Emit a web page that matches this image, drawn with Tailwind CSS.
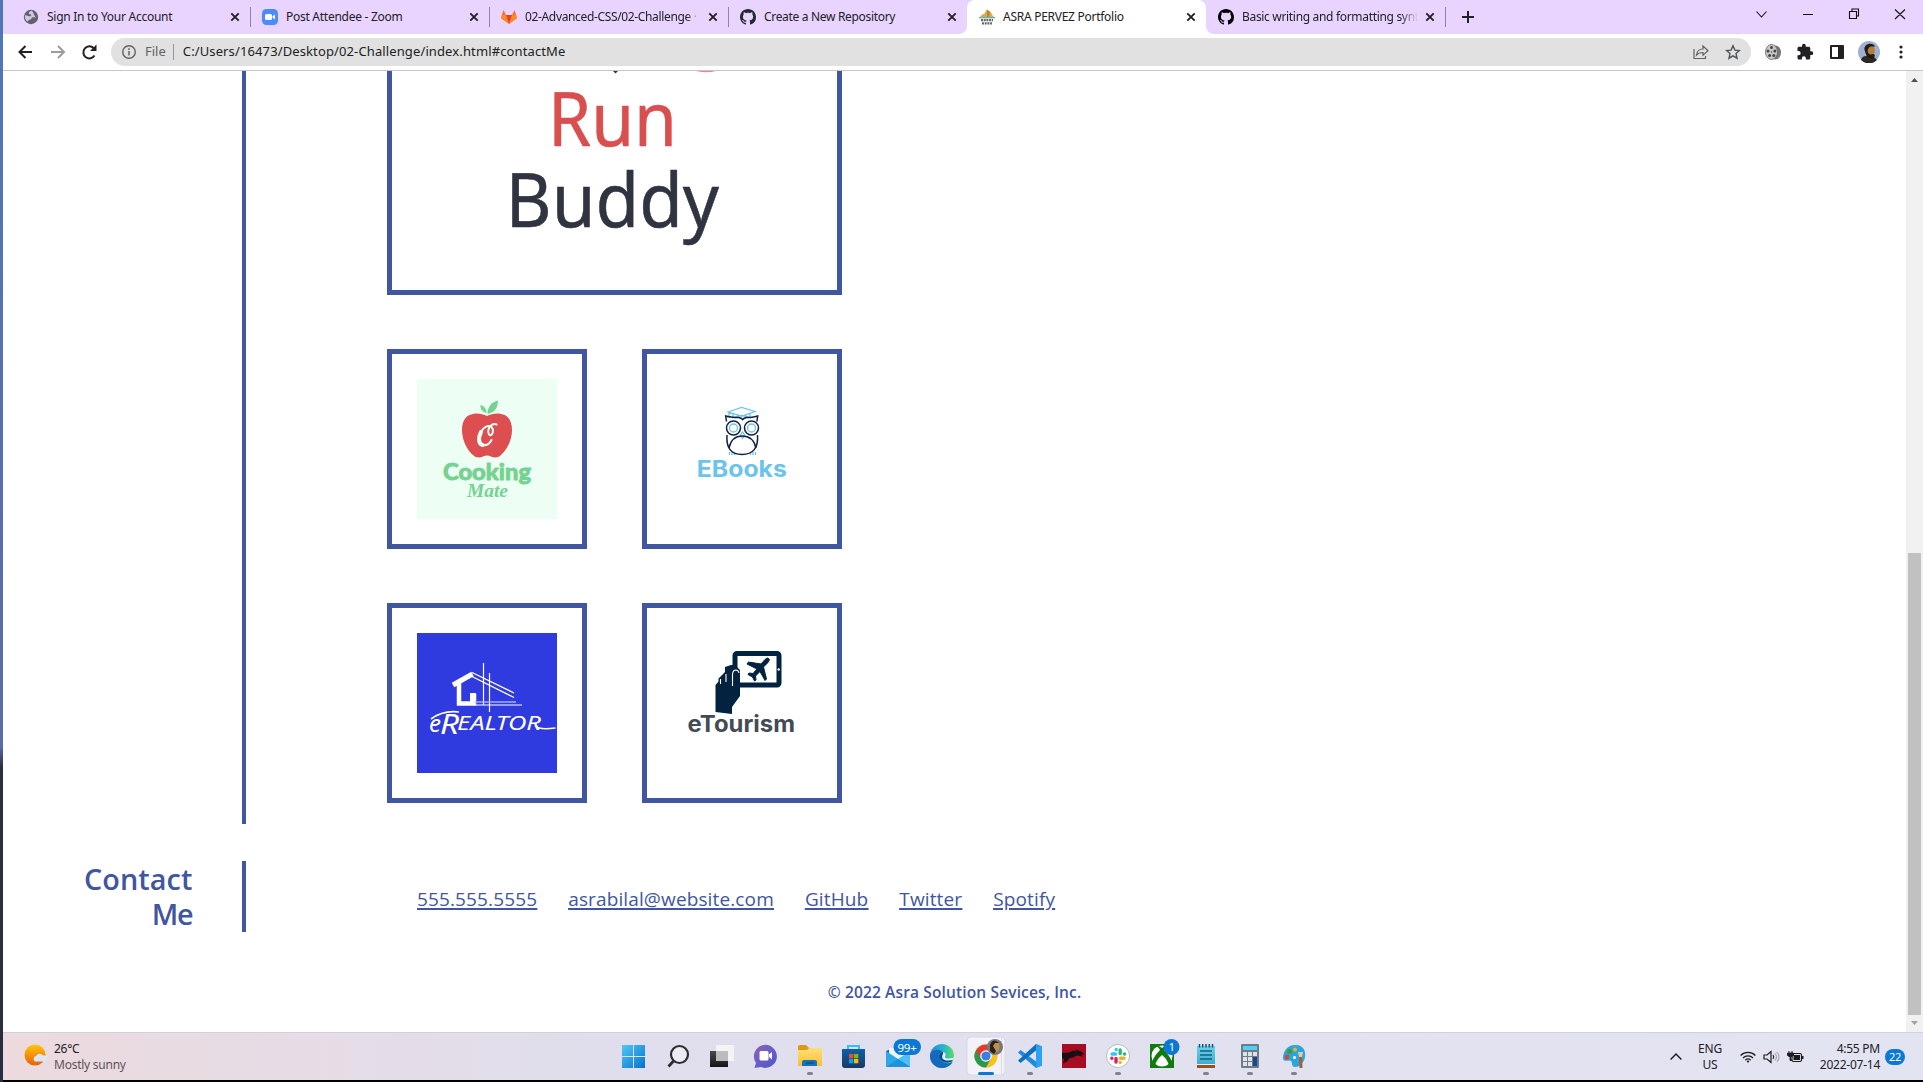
<!DOCTYPE html>
<html lang="en">
<head>
<meta charset="utf-8">
<title>ASRA PERVEZ Portfolio</title>
<script src="https://cdn.jsdelivr.net/npm/@tailwindcss/browser@4"></script>
</head>
<body class="w-[1923px] h-[1082px] overflow-hidden flex bg-white font-['Noto_Sans',sans-serif] text-[#202124]">
<svg class="hidden">
  <symbol id="x" viewBox="0 0 10 10"><path d="M1.3 1.3l7.4 7.4M8.7 1.3L1.3 8.7" stroke="#202124" stroke-width="1.9"/></symbol>
  <symbol id="gh" viewBox="0 0 16 16"><path d="M8 0C3.58 0 0 3.58 0 8c0 3.54 2.29 6.53 5.47 7.59.4.07.55-.17.55-.38 0-.19-.01-.82-.01-1.49-2.01.37-2.53-.49-2.69-.94-.09-.23-.48-.94-.82-1.13-.28-.15-.68-.52-.01-.53.63-.01 1.08.58 1.23.82.72 1.21 1.87.87 2.33.66.07-.52.28-.87.51-1.07-1.78-.2-3.64-.89-3.64-3.95 0-.87.31-1.59.82-2.15-.08-.2-.36-1.02.08-2.12 0 0 .67-.21 2.2.82.64-.18 1.32-.27 2-.27s1.36.09 2 .27c1.53-1.04 2.2-.82 2.2-.82.44 1.1.16 1.92.08 2.12.51.56.82 1.27.82 2.15 0 3.07-1.87 3.75-3.65 3.95.29.25.54.73.54 1.48 0 1.07-.01 1.93-.01 2.2 0 .21.15.46.55.38A8.01 8.01 0 0 0 16 8c0-4.42-3.58-8-8-8z"/></symbol>
</svg>
<div class="w-[3px] shrink-0 bg-linear-to-b from-[#5276b8] via-[#5b6ca6] via-69% to-[#2a2d42] to-71%"></div>
<div class="flex-1 min-w-0 flex flex-col">

  <!-- tab strip -->
  <div class="h-[34px] shrink-0 bg-[#e8d4ff] flex items-center text-[12px] leading-[18px] tracking-[-0.27px]">
    <div class="w-[247px] h-full flex items-center pl-5 pr-[10px] relative">
      <svg class="w-4 h-4 mr-2 shrink-0" viewBox="0 0 16 16"><circle cx="8" cy="8" r="7.2" fill="#5f6368"/><path d="M9 1.500c-2 .8-3.500 1.600-3.200 3 .3 1 2 .6 2.400 1.600.3 1-1.200 1.300-2 1.200C4.500 7 3 6 2 6.500c-.7 3 1 5 2.800 6.300C5 11.500 6 11 7.600 10.600 9 10 8 8.600 9.500 8.300c1.500-.2 3 0 3.600 1.200" fill="#e8d4ff" opacity=".85"/></svg>
      <span class="whitespace-nowrap">Sign In to Your Account</span>
      <svg class="w-[10px] h-[10px] ml-auto"><use href="#x"/></svg>
      <div class="absolute -right-px top-[7px] w-px h-5 bg-[#8e8599]"></div>
    </div>
    <div class="w-[239px] h-full flex items-center pl-3 pr-[10px] relative">
      <svg class="w-4 h-4 mr-2 shrink-0" viewBox="0 0 16 16"><rect width="16" height="16" rx="4.500" fill="#4a8cff"/><rect x="3" y="5" width="7" height="6" rx="1.500" fill="#fff"/><path d="M10.600 7.200L13 5.400v5.200L10.600 8.800z" fill="#fff"/></svg>
      <span class="whitespace-nowrap">Post Attendee - Zoom</span>
      <svg class="w-[10px] h-[10px] ml-auto"><use href="#x"/></svg>
      <div class="absolute -right-px top-[7px] w-px h-5 bg-[#8e8599]"></div>
    </div>
    <div class="w-[239px] h-full flex items-center pl-3 pr-[10px] relative">
      <svg class="w-4 h-4 mr-2 shrink-0" viewBox="0 0 16 16"><path d="M8 15L.3 9.400 0 8.500 2.600 1l2.300 5h6.200l2.300-5L16 8.500l-.3.900z" fill="#fc6d26"/><path d="M8 15L4.900 6h6.200z" fill="#e24329"/><path d="M0 8.500L.6 6H4.900L8 15zM16 8.500L15.400 6h-4.300L8 15z" fill="#fca326" opacity=".6"/></svg>
      <span class="whitespace-nowrap w-[174px] overflow-hidden mask-r-from-93% tracking-[-0.35px]">02-Advanced-CSS/02-Challenge ·</span>
      <svg class="w-[10px] h-[10px] ml-auto shrink-0"><use href="#x"/></svg>
      <div class="absolute -right-px top-[7px] w-px h-5 bg-[#8e8599]"></div>
    </div>
    <div class="w-[239px] h-full flex items-center pl-3 pr-[10px]">
      <svg class="w-4 h-4 mr-2 shrink-0" fill="#24292f"><use href="#gh"/></svg>
      <span class="whitespace-nowrap tracking-[-0.32px]">Create a New Repository</span>
      <svg class="w-[10px] h-[10px] ml-auto"><use href="#x"/></svg>
    </div>
    <div class="w-[239px] h-full flex items-center pl-3 pr-[10px] bg-white rounded-t-lg relative">
      <svg class="absolute -left-2 bottom-0 w-2 h-2" viewBox="0 0 8 8"><path d="M8 0v8H0a8 8 0 0 0 8-8z" fill="#fff"/></svg>
      <svg class="absolute -right-2 bottom-0 w-2 h-2" viewBox="0 0 8 8"><path d="M0 0v8h8a8 8 0 0 1-8-8z" fill="#fff"/></svg>
      <svg class="w-4 h-4 mr-2 shrink-0" viewBox="0 0 16 16"><path d="M1 8L3 5.500 5 5l3-4.500 4 3 1.500 3L15 8z" fill="#e0a93c"/><path d="M8 .5l3 2.500-1 5H8z" fill="#a98a55"/><path d="M0 8.700h16" stroke="#4fb3c9" stroke-width="1.300"/><path d="M2 11.200h12M3 14.300h10" stroke="#666" stroke-width="2.300" stroke-dasharray="2 .7"/></svg>
      <span class="whitespace-nowrap">ASRA PERVEZ Portfolio</span>
      <svg class="w-[10px] h-[10px] ml-auto"><use href="#x"/></svg>
    </div>
    <div class="w-[240px] h-full flex items-center pl-3 pr-[11px] relative">
      <svg class="w-4 h-4 mr-2 shrink-0"><use href="#gh"/></svg>
      <span class="whitespace-nowrap w-[176px] overflow-hidden mask-r-from-90% tracking-[-0.32px]">Basic writing and formatting synt</span>
      <svg class="w-[10px] h-[10px] ml-auto shrink-0"><use href="#x"/></svg>
      <div class="absolute right-0 top-[7px] w-px h-5 bg-[#8e8599]"></div>
    </div>
    <svg class="w-3 h-3 ml-4" viewBox="0 0 12 12"><path d="M6 0v12M0 6h12" stroke="#202124" stroke-width="2"/></svg>
    <svg class="w-[150px] h-7 ml-auto mr-[17px] -mt-1.5" viewBox="0 0 150 28" fill="none" stroke="#111" stroke-width="1.100"><path d="M.5 11.500l5 5.500 5-5.500M47 14.500h10M93.500 11.500h7v7h-7zM96 11.500v-2.500h6.500v7h-2M139 9.500l10 9.500M149 9.500l-10 9.500"/></svg>
  </div>

  <!-- toolbar -->
  <div class="h-[37px] shrink-0 bg-white border-b border-[#c6c6c6] flex items-center">
    <svg class="w-[80px] h-5 ml-[15px]" viewBox="0 0 80 20" fill="none" stroke-width="2"><path d="M14 10H1.500M7.500 4l-6 6 6 6" stroke="#202124"/><path d="M33 10h12.500M40 4l6 6-6 6" stroke="#9a9c9f"/><path d="M76.500 13.500a6 6 0 1 1-.8-7.300" stroke="#202124"/><path d="M78.500 2.500v6.500H72z" fill="#202124"/></svg>
    <div class="ml-[13px] w-[1640px] h-7 rounded-full bg-[#e1e1e1] flex items-center pl-[11px] pr-[10px] text-[13px]">
      <svg class="w-[14px] h-[14px]" viewBox="0 0 14 14"><circle cx="7" cy="7" r="6.300" fill="none" stroke="#5f6368" stroke-width="1.400"/><path d="M7 6v4.500M7 3.300v1.600" stroke="#5f6368" stroke-width="1.500"/></svg>
      <span class="ml-[9px] text-[#5f6368]">File</span>
      <div class="w-px h-4 bg-[#9a9a9a] ml-[7px]"></div>
      <span class="ml-[9px] tracking-[0.12px]">C:/Users/16473/Desktop/02-Challenge/index.html#contactMe</span>
      <svg class="w-4 h-4 ml-auto" viewBox="0 0 16 16" fill="none" stroke="#5f6368" stroke-width="1.200"><path d="M1 5v9.500h11.500V12M3.500 11c.5-4 3-6 6.500-6V2l5 4.700-5 4.500V8.500c-3 0-5 .7-6.500 2.500z"/></svg>
      <svg class="w-4 h-4 ml-4" viewBox="0 0 16 16" fill="none" stroke="#4f5357" stroke-width="1.400"><path d="M8 1.800l1.900 4.300 4.600.4-3.500 3.100 1 4.600L8 11.800l-4 2.400 1-4.600-3.500-3.100 4.600-.4z"/></svg>
    </div>
    <svg class="w-4 h-4 ml-[14px]" viewBox="0 0 16 16"><ellipse cx="10.500" cy="8.500" rx="5.500" ry="7" fill="#777"/><ellipse cx="6.500" cy="8" rx="6" ry="7.500" fill="#c9c9c9" stroke="#666" stroke-width=".8"/><g fill="#444"><circle cx="6.500" cy="3.500" r="1.500"/><circle cx="3" cy="7" r="1.500"/><circle cx="9.800" cy="7" r="1.500"/><circle cx="4.600" cy="11.500" r="1.500"/><circle cx="8.800" cy="11.500" r="1.500"/><circle cx="6.500" cy="8" r=".7"/></g></svg>
    <svg class="w-[18px] h-[18px] ml-[15px]" viewBox="0 0 24 24" fill="#202124"><path d="M20.500 11H19V7c0-1.100-.9-2-2-2h-4V3.500a2.500 2.500 0 0 0-5 0V5H4c-1.100 0-2 .9-2 2v3.800h1.500a2.700 2.700 0 0 1 0 5.400H2V20c0 1.100.9 2 2 2h3.800v-1.500a2.700 2.700 0 0 1 5.400 0V22H17c1.100 0 2-.9 2-2v-4h1.500a2.500 2.500 0 0 0 0-5z"/></svg>
    <svg class="w-[14px] h-[14px] ml-4" viewBox="0 0 14 14"><rect width="14" height="14" rx="1" fill="#202124"/><rect x="2" y="2" width="6" height="10" fill="#fff"/></svg>
    <svg class="w-[22px] h-[22px] ml-[14px]" viewBox="0 0 22 22"><circle cx="11" cy="11" r="11" fill="#9fb0d0"/><path d="M3 19c1-4 4-4 7-4l6 1 3 3a11 11 0 0 1-16 0z" fill="#2a2a22"/><ellipse cx="12" cy="9.500" rx="4.800" ry="6" fill="#b07f3a"/><path d="M6.500 9c-1-7 9-8 10.500-3.500l-5 0-2.500 3.500.5 3 2 1.500 4-.5 1 2-3 3-5-2z" fill="#221c18"/></svg>
    <svg class="w-1 h-[14px] ml-[19px]" viewBox="0 0 4 14" fill="#202124"><circle cx="2" cy="2" r="1.600"/><circle cx="2" cy="7" r="1.600"/><circle cx="2" cy="12" r="1.600"/></svg>
  </div>

  <!-- page -->
  <div class="h-[961px] shrink-0 flex">
    <main class="flex-1 bg-white text-[#4056a1] font-['Open_Sans',sans-serif]">
      <section class="flex h-[753px]">
        <div class="w-[243px] border-r-4 border-[#4056a1]"></div>
        <div class="ml-[141px] w-[455px] flex flex-col gap-[54px]">
          <div class="h-[224px] border-5 border-t-0 border-[#4056a1]">
            <svg class="w-[445px] h-[219px]" viewBox="0 0 445 219" font-family="Noto Sans" font-size="75.500">
              <path d="M221 0h5l-2.500 2.500z" fill="#303440"/><path d="M304 0h20q-9 2.500-20 0z" fill="#e58a8a"/>
              <text x="156" y="75" textLength="129" lengthAdjust="spacingAndGlyphs" fill="#d94f4f" stroke="#d94f4f" stroke-width=".5">Run</text>
              <text x="113.500" y="156" textLength="213.500" lengthAdjust="spacingAndGlyphs" fill="#303440" stroke="#303440" stroke-width=".5">Buddy</text>
            </svg>
          </div>
          <div class="grid grid-cols-2 gap-x-[55px] gap-y-[54px]">
            <div class="h-[200px] border-5 border-[#4056a1] p-[25px]">
              <svg class="w-[140px] h-[140px] bg-[#edfff5]" viewBox="0 0 140 140">
                <path d="M70 37c4-2 9-3 14-2 8 1 11 8 11 16 0 10-5 20-11 25-3 3-7 3-10 1.500q-4-2-8 0c-3 1.500-7 1.500-10-1.500-6-5-11-15-11-25 0-8 3-15 11-16 5-1 10 0 14 2z" fill="#dd4e50"/>
                <path d="M70.500 35c0-7 4-12 10.500-13.500 0 7-3 12-10.500 13.500zM69.500 34c-4-1-6.500-4-6-8 4 1 6 4 6 8z" fill="#76d290"/>
                <path d="M79.500 45.500c-3-1.500-7 1-8 5-.8 3.500.6 6.500 2.600 5.500s2.700-5.500.4-8c-3-2.500-8 0-10.500 5s-3 12 1.500 13 7.500-2 9-5" fill="none" stroke="#edfff5" stroke-width="2" stroke-linecap="round"/><path d="M64 53c-2.500 5-3 12 1.500 13" fill="none" stroke="#edfff5" stroke-width="4" stroke-linecap="round"/>
                <text x="26" y="101" font-family="Lato" font-weight="900" font-size="23" textLength="88" lengthAdjust="spacingAndGlyphs" fill="#76d290" stroke="#76d290" stroke-width=".8" stroke-linejoin="round">Cooking</text>
                <text x="50" y="117.500" font-family="Liberation Serif" font-style="italic" font-weight="700" font-size="18" textLength="41" lengthAdjust="spacingAndGlyphs" fill="#76d290">Mate</text>
              </svg>
            </div>
            <div class="h-[200px] border-5 border-[#4056a1] p-[25px]">
              <svg class="w-[140px] h-[140px]" viewBox="0 0 140 140">
                <g fill="none" stroke="#6cc4ea" stroke-width="1.300"><path d="M56 33l13.500-4.500L83 32.500 70 37zM61 35v3.500q9-3.500 17 0V35M57 33.500v4M55 38h4"/><circle cx="61.500" cy="49" r="4"/><circle cx="79.500" cy="49" r="4"/><path d="M70.500 53l-2 3 2 3.500 2-3.500zM57.500 73v3M60 73v3M62.500 73v3M78.500 73v3M81 73v3M83.500 73v3"/></g>
                <g fill="none" stroke="#14213f" stroke-width="1.500"><path d="M54.500 42.500l-.8-5.500q10 2 13 1.500 3 .5 4 2 1-1.500 4-2 3 .5 11-1.500l-.8 5.500M55 56c-1 13 4 19.500 15 19.500S86.500 69 85.500 56"/><circle cx="61.500" cy="49" r="7"/><circle cx="79.500" cy="49" r="7"/><path d="M57 69c2-9 7-12 13-12s12 3 14 12"/></g>
                <text x="24.800" y="97.700" font-family="Inter" font-weight="700" font-size="22.500" textLength="90" lengthAdjust="spacingAndGlyphs" fill="#6cc4ea">EBooks</text>
              </svg>
            </div>
            <div class="h-[200px] border-5 border-[#4056a1] p-[25px]">
              <svg class="w-[140px] h-[140px] bg-[#2f3adf]" viewBox="0 0 140 140">
                <g fill="none" stroke="#fff"><path d="M36 52L55.500 41" stroke-width="5"/><path d="M42 49v21.500h15V61" stroke-width="4.500"/><path d="M53 60h6v12h-6z" fill="#fff" stroke="none"/><path d="M55 39.500L97 60M55 43.500l42 21" stroke-width="1.300"/><path d="M66.500 30v42.500M72.500 40v39M58 72h47" stroke-width="1.200"/><path d="M58 69h41" stroke="#a9aef2" stroke-width="1.600"/></g>
                <g fill="#fff" font-family="Noto Sans" font-style="italic"><text x="12" y="99" font-size="23" textLength="12" lengthAdjust="spacingAndGlyphs">e</text><text x="23" y="101" font-size="28" textLength="19" lengthAdjust="spacingAndGlyphs">R</text><text x="40" y="97" font-size="19" textLength="84" lengthAdjust="spacingAndGlyphs">EALTOR</text></g>
                <path d="M14 86q12-9 28-7M118 93q4 4 20.500 2" fill="none" stroke="#fff" stroke-width="1.600"/>
              </svg>
            </div>
            <div class="h-[200px] border-5 border-[#4056a1] p-[25px]">
              <svg class="w-[140px] h-[140px]" viewBox="0 0 140 140">
                <rect x="63" y="20.500" width="44" height="31.500" rx="2" fill="none" stroke="#02233f" stroke-width="5"/>
                <circle cx="106.700" cy="36.500" r="1.200" fill="#fff"/>
                <path d="M43.500 79V52l3-3.500v-3l3.500-3.500 3-3v-5l6-2h4l5 5v26l-8 11v7z" fill="#02233f"/>
                <path d="M48.500 51v-5M54 49v-8M60.500 53V41q.5-4 3.500-4 2.500.3 3 3" fill="none" stroke="#fff" stroke-width="1.100"/>
                <path d="M96.500 25.500q2 1-1 4.500l-4 4 3 12-1.500 1.500-5-9-4.500 4.500.5 4-1.500 1-2-4-4.500-2.500 1-1.500 4 .5 4-4.500-10-5 1.500-2 12.500 2 4-4.500q3-2.500 3.500-1z" fill="#02233f" stroke="#02233f"/>
                <text x="15.500" y="98.700" font-family="Inter" font-weight="700" font-size="22.500" textLength="107.500" lengthAdjust="spacingAndGlyphs" fill="#434c55">eTourism</text>
              </svg>
            </div>
          </div>
        </div>
      </section>
      <section class="mt-[38px] flex h-[70px]">
        <h2 class="w-[243px] border-r-4 border-[#4056a1] pr-[49.5px] pl-[60px] -mt-px pt-0 text-right text-[28.8px] leading-[35px] font-semibold h-[71px]"><span class="tracking-[0.1px]">Contact</span><br><span class="tracking-[-1.2px]">Me</span></h2>
        <div class="ml-[171px] mt-[23px] h-7 flex gap-[31px] text-[19px] leading-7 tracking-[0.13px] underline decoration-2 underline-offset-2">
          <a>555.555.5555</a><a>asrabilal@website.com</a><a>GitHub</a><a>Twitter</a><a>Spotify</a>
        </div>
      </section>
      <footer class="mt-[50px] text-center text-[15.5px] leading-5 font-semibold tracking-[0.14px]">© 2022 Asra Solution Sevices, Inc.</footer>
    </main>
    <div class="w-[17px] bg-[#f1f1f1] flex flex-col items-center">
      <svg class="w-[7px] h-1 mt-[7px]" viewBox="0 0 7 4"><path d="M3.500 0L7 4H0z" fill="#505050"/></svg>
      <div class="w-[13px] h-[462px] bg-[#c1c1c1] mt-[471px]"></div>
      <svg class="w-[7px] h-1 mt-[6px]" viewBox="0 0 7 4"><path d="M3.500 4L7 0H0z" fill="#a3a3a3"/></svg>
    </div>
  </div>

  <!-- taskbar -->
  <div class="h-12 shrink-0 flex border-t border-[#d3cfdf] bg-linear-to-r from-[#ecdade] via-[#e0deec] via-30% to-[#e3e4f2] text-[12px] leading-4 tracking-[-0.25px]">
    <div class="w-[609px] flex items-center pl-[21px]">
      <svg class="w-6 h-6 -mt-1" viewBox="0 0 24 24"><defs><linearGradient id="sun" x2="0" y2="1"><stop stop-color="#ffc60a"/><stop offset="1" stop-color="#e8600a"/></linearGradient></defs><circle cx="11" cy="12" r="10.500" fill="url(#sun)"/><path d="M11 18.500a3 3 0 0 1 1-5.500 4 4 0 0 1 7-.5 3 3 0 0 1 1.500 6z" fill="#dbe6f7"/></svg>
      <div class="ml-[6px]"><div>26°C</div><div class="text-[#5c5459]">Mostly sunny</div></div>
    </div>
    <svg class="w-[704px] h-[47px] shrink-0" viewBox="612 1033 704 47">
      <defs>
        <linearGradient id="w" x2="1" y2="1"><stop stop-color="#4fc8f4"/><stop offset="1" stop-color="#0672cf"/></linearGradient>
        <linearGradient id="c" x2="1" y2="1"><stop stop-color="#8a63b5"/><stop offset="1" stop-color="#4d57d0"/></linearGradient>
        <linearGradient id="f" x2="0" y2="1"><stop stop-color="#ffe07a"/><stop offset="1" stop-color="#f9bf30"/></linearGradient>
        <linearGradient id="e" x2="1" y2="0"><stop stop-color="#1b8fd9"/><stop offset=".6" stop-color="#2ab8c9"/><stop offset="1" stop-color="#5fdc55"/></linearGradient>
        <linearGradient id="s" x2="0" y2="1"><stop stop-color="#0f5fa8"/><stop offset="1" stop-color="#1b3864"/></linearGradient>
        <linearGradient id="k" x2="0" y2="1"><stop stop-color="#4a4a4a"/><stop offset="1" stop-color="#151515"/></linearGradient>
        <linearGradient id="n" x2="0" y2="1"><stop stop-color="#6ad5ec"/><stop offset="1" stop-color="#3aa7c9"/></linearGradient>
      </defs>
      <path d="M622 1045h11v11h-11zM634 1045h11v11h-11zM622 1057h11v11h-11zM634 1057h11v11h-11z" fill="url(#w)"/>
      <circle cx="679.500" cy="1054.500" r="8.500" fill="#ecebf3" stroke="#2d2d2d" stroke-width="2.200"/><path d="M673.500 1061l-5 5.500" stroke="#2d2d2d" stroke-width="2.800"/>
      <path d="M710 1051h18v16h-18z" fill="url(#k)"/><path d="M716 1045h18v16h-18z" fill="#f4f4f4"/><path d="M716 1051h12v10h-12z" fill="#bcbcbc"/>
      <path d="M754.500 1068l1.500-5a11.500 11.500 0 1 1 5 4z" fill="url(#c)"/><rect x="759.500" y="1051" width="9" height="9.500" rx="1.500" fill="#fff"/><path d="M769 1054.500l3-2.500v7.500l-3-2.500z" fill="#fff"/>
      <path d="M798 1047q0-2 2-2h6l3 3h13v6h-24z" fill="#dc9a12"/><path d="M798 1050h9l2.500-2H822v18h-24z" fill="url(#f)"/><path d="M802 1066v-4q0-2 2-2h11q2 0 2 2v4z" fill="#1472bd"/><path d="M806 1063h8" stroke="#0b4f90" stroke-width="1.500"/>
      <path d="M848 1050v-4h11v4" fill="none" stroke="#35c0f2" stroke-width="2"/><path d="M842 1049h23v16q0 3-3 3h-17q-3 0-3-3z" fill="url(#s)"/><path d="M849 1054h4.300v4.300H849z" fill="#f25022"/><path d="M854 1054h4.300v4.300H854z" fill="#7fba00"/><path d="M849 1059h4.300v4.300H849z" fill="#00a4ef"/><path d="M854 1059h4.300v4.300H854z" fill="#ffb900"/>
      <path d="M886 1051l12-5 12 5v16h-24z" fill="#1267b4"/><path d="M889 1048h18v9l-9 5-9-6z" fill="#eef4fb"/><path d="M886 1051l12 8 12 8h-24z" fill="#2fa7e6"/><path d="M910 1051l-12 8 12 8z" fill="#4ec0f2"/><path d="M886 1067l12-8 12 8z" fill="#1c93db"/>
      <rect x="893.500" y="1039" width="27.500" height="16" rx="8" fill="#0a78d4"/><text x="897.500" y="1051.500" font-size="11.500" textLength="19" fill="#fff">99+</text>
      <circle cx="942" cy="1056" r="12" fill="url(#e)"/><path d="M930 1056c0-7 10-8 12.500-4-4 0-5 4-3 7 3 5 9 5 13 3-2 4-7 6-11 6a12 12 0 0 1-11.500-12z" fill="#1568bd"/><path d="M942.500 1052c3.500.5 3 3.500 2 5 0 2 6 3 9.300-.5-1 2-2 4-2 5-5 2-10 1-12.300-3-1.500-3 .5-6.500 3-6.500z" fill="#0d4c92"/><path d="M943 1052c4 1 2.500 4 1.800 5.300 1 1.700 7 1.700 9.200-.8l-.5 3c-4 2-10 1-11-1-1-3 1-4 .5-6.500z" fill="#e4f3f4"/>
      <rect x="967" y="1037" width="38" height="38" rx="4" fill="#f3f2f9" stroke="#d9d7e6"/><path d="M1001.500 1038v36" stroke="#dcdae6"/>
      <circle cx="986" cy="1056" r="11.500" fill="#fbc116"/><path d="M976 1050.200a11.500 11.500 0 0 0 10 17.300l5-9-5-2.500z" fill="#269a4a"/><path d="M976 1050.200a11.500 11.500 0 0 1 20 0H986v5.800l-5 3z" fill="#e33b2e"/><circle cx="986" cy="1056" r="5.800" fill="#fff"/><circle cx="986" cy="1056" r="4.600" fill="#3b7de9"/>
      <circle cx="995" cy="1047" r="8" fill="#77787e"/><ellipse cx="995.500" cy="1046.500" rx="4" ry="5.500" fill="#c19148"/><path d="M990 1045q3-8 9-2l-4 0-2 3 3 5-2 3-4-3z" fill="#2a221c"/>
      <path d="M1036 1044l6 2.500v19l-6 2.500-18-15.500 2.500-2.500 15.500 11.500z" fill="#1b8be0"/><path d="M1036 1044v24l6-2.500v-19z" fill="#2ba3f2"/><path d="M1020.500 1063l-2.500-2.500 18-16.500v6.500z" fill="#0f6fbf"/>
      <path d="M1062 1044h24v24h-24z" fill="#a80c22"/><path d="M1062 1053l7-.5 4-2 4 .5-2-2 6 2.500 4 3-4 0 2 2-6-1-4 2-4 1-2 3-4 2 1-4-2-2z" fill="#1a0d14"/>
      <circle cx="1118" cy="1056" r="11.500" fill="#fff" stroke="#bbb"/><g stroke-width="3.400" stroke-linecap="round"><path d="M1112 1054h3.500M1116.200 1049.500v.1" stroke="#36c5f0"/><path d="M1120.200 1050v3.500M1124.500 1054h.1" stroke="#2eb67d"/><path d="M1120.500 1058.200h3.500M1120.200 1062.500v.1" stroke="#ecb22e"/><path d="M1116 1058.500v3.500M1111.800 1058.200h.1" stroke="#e01e5a"/></g>
      <path d="M1150 1044h24v24h-24z" fill="#107c10"/><circle cx="1162" cy="1056" r="10.500" fill="#fff"/><path d="M1154 1046q5-1 8 2 3-3 8-2-4 0-6 4 6 6 8 12l-3 4q-1-6-7-11-6 5-7 11l-3-4q2-6 8-12-2-4-6-4z" fill="#107c10"/>
      <circle cx="1171.500" cy="1047" r="8" fill="#0a78d4"/><text x="1168.500" y="1051.300" font-size="11.500" fill="#fff">1</text>
      <path d="M1197 1046h18v20h-18z" fill="url(#n)"/><path d="M1197 1065h18v3h-18z" fill="#9a4f22"/><path d="M1197 1064.500h18" stroke="#eee"/><path d="M1200 1051h12M1200 1055h12M1200 1059h12" stroke="#125f83" stroke-width="1.400"/><path d="M1199.500 1044v3.500M1202.700 1044v3.500M1206 1044v3.500M1209.300 1044v3.500M1212.500 1044v3.500" stroke="#16506e" stroke-width="1.500"/>
      <rect x="1241" y="1044" width="18" height="24" rx="1" fill="#727a85"/><path d="M1243 1046h14v4h-14z" fill="#4fd1f5"/><path d="M1243 1052h4v4h-4zM1248 1052h4v4h-4zM1253 1052h4v4h-4zM1243 1057h4v4h-4zM1248 1057h4v4h-4zM1243 1062h4v4h-4zM1248 1062h4v4h-4z" fill="#dfe3e8"/><path d="M1253 1057h4v9h-4z" fill="#144a93"/>
      <path d="M1283 1058c0-8 6-14 13-13 7 0 10 6 9 12s-5 10-10 10c-4 0-2-4-4-6s-8 2-8-3z" fill="#2aa5dd"/><circle cx="1289.500" cy="1051.500" r="2.400" fill="#3f9b2c"/><circle cx="1295" cy="1049.500" r="2" fill="#f2b21b"/><circle cx="1287" cy="1057" r="2.400" fill="#d8452e"/><circle cx="1294.500" cy="1057.500" r="1.500" fill="#fff"/><path d="M1298 1052h5l-1 5h-3z" fill="#e4c9a5"/><path d="M1299 1057h3l.5 11h-3z" fill="#a85f2a"/>
      <g fill="#83828c"><rect x="807" y="1072" width="6" height="3" rx="1.500"/><rect x="1027" y="1072" width="6" height="3" rx="1.500"/><rect x="1115" y="1072" width="6" height="3" rx="1.500"/><rect x="1203" y="1072" width="6" height="3" rx="1.500"/><rect x="1247" y="1072" width="6" height="3" rx="1.500"/><rect x="1291" y="1072" width="6" height="3" rx="1.500"/></g>
      <rect x="978" y="1072" width="16" height="3" rx="1.500" fill="#0a78d4"/>
    </svg>
    <div class="ml-auto flex items-center pr-[18px]">
      <svg class="w-3 h-[7px]" viewBox="0 0 12 7"><path d="M.6 6.400L6 1l5.400 5.400" fill="none" stroke="#1b1b1b" stroke-width="1.400"/></svg>
      <div class="w-[30px] ml-[13px] text-center"><div>ENG</div><div>US</div></div>
      <svg class="w-4 h-3 ml-[15px]" viewBox="0 0 16 12" fill="none" stroke="#1b1b1b" stroke-width="1.200"><path d="M.6 4.500a10.500 10.500 0 0 1 14.800 0M3 7a7 7 0 0 1 10 0M5.300 9.200a3.900 3.900 0 0 1 5.400 0"/><circle cx="8" cy="10.500" r="1.100" fill="#1b1b1b" stroke="none"/></svg>
      <svg class="w-[17px] h-[14px] ml-[7px]" viewBox="0 0 17 14" fill="none" stroke="#1b1b1b" stroke-width="1.200"><path d="M1 5v4h3l4 3.500V1.500L4 5z"/><path d="M10 5q1.500 2 0 4"/><path d="M12 3.500q3 3.500 0 7M14 2q4 5 0 10" stroke="#aaa9b3"/></svg>
      <svg class="w-[17px] h-3 ml-[7px]" viewBox="0 0 17 12"><path d="M2 0v2.500M5 0v2.500" stroke="#1b1b1b"/><path d="M.5 2h6v2.500q-3 3-6 0zM3 5v4.500h2" fill="#1b1b1b" stroke="#1b1b1b" stroke-width=".8"/><rect x="5" y="2.500" width="9.500" height="8" rx="1.500" fill="none" stroke="#1b1b1b" stroke-width="1.200"/><path d="M6.500 4H13v5H6.500zM15 5h1.500v3H15z" fill="#1b1b1b"/></svg>
      <div class="w-[76px] text-right"><div>4:55 PM</div><div>2022-07-14</div></div>
      <div class="ml-[5px] w-5 h-4 rounded-full bg-[#0a78d4] text-white text-center text-[11px] leading-4">22</div>
    </div>
  </div>
  <div class="h-[2px] bg-black"></div>
</div>
</body>
</html>
